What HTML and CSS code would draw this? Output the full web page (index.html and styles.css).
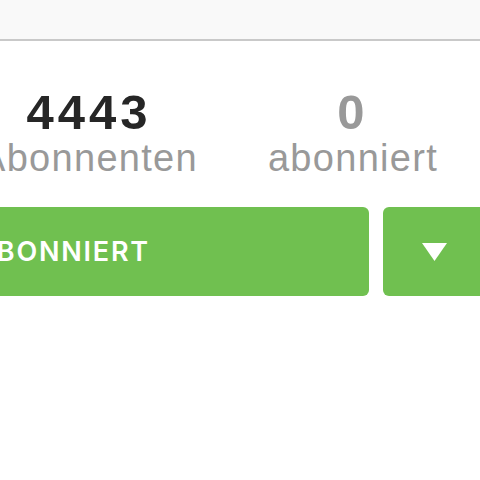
FILE: index.html
```html
<!DOCTYPE html>
<html lang="de">

<head>
    <meta charset="UTF-8">
    <meta name="viewport" content="width=device-width, initial-scale=1.0">
    <title>Profil</title>
    <link rel="stylesheet" href="styles.css">
</head>

<body>
    <div class="topbar"></div>

    <div class="profile">
        <div class="stats">
            <div class="stat">
                <div class="stat-num">4443</div>
                <div class="stat-label">Abonnenten</div>
            </div>
            <div class="stat">
                <div class="stat-num muted">0</div>
                <div class="stat-label">abonniert</div>
            </div>
        </div>

        <div class="actions">
            <button type="button" class="follow-btn">ABONNIERT</button>
            <button type="button" class="more-btn">
                <svg width="25" height="18" viewBox="0 0 25 18">
                    <polygon points="0,0 25,0 12.5,18" fill="#fff" />
                </svg>
            </button>
        </div>
    </div>
</body>

</html>
```

FILE: styles.css
```css
body {
    font-family: "Liberation Sans", Arial, sans-serif;
    background-color: #fff;
    margin: 0;
    padding: 0;
    width: 480px;
    height: 480px;
    overflow: hidden;
}

.topbar {
    height: 39px;
    background-color: #f9f9f9;
    border-bottom: 2px solid #c9c9c9;
}

/* Stats */
.stats {
    display: flex;
    margin-left: -43px;
    margin-top: 45px;
}

.stat {
    flex: 0 0 264px;
    text-align: center;
}

.stat-num {
    font-size: 49px;
    font-weight: bold;
    line-height: 52px;
    color: #262626;
    letter-spacing: 4px;
}

.stat-num.muted {
    color: #999;
}

.stat-label {
    font-size: 38px;
    line-height: 40px;
    color: #999;
    letter-spacing: 1.3px;
}

/* Buttons */
.actions {
    display: flex;
    gap: 14px;
    margin-left: -236px;
    margin-top: 29px;
}

.follow-btn,
.more-btn {
    height: 89px;
    border: none;
    border-radius: 6px;
    background-color: #70c050;
    color: #fff;
    cursor: pointer;
    padding: 0;
}

.follow-btn {
    flex: 0 0 605px;
    font-family: Inter, "Liberation Sans", sans-serif;
    font-size: 27px;
    font-weight: 600;
    letter-spacing: 1.8px;
    text-align: right;
    padding-right: 219px;
}

.more-btn {
    flex: 0 0 110px;
    display: flex;
    align-items: center;
    padding-left: 39px;
}
```
